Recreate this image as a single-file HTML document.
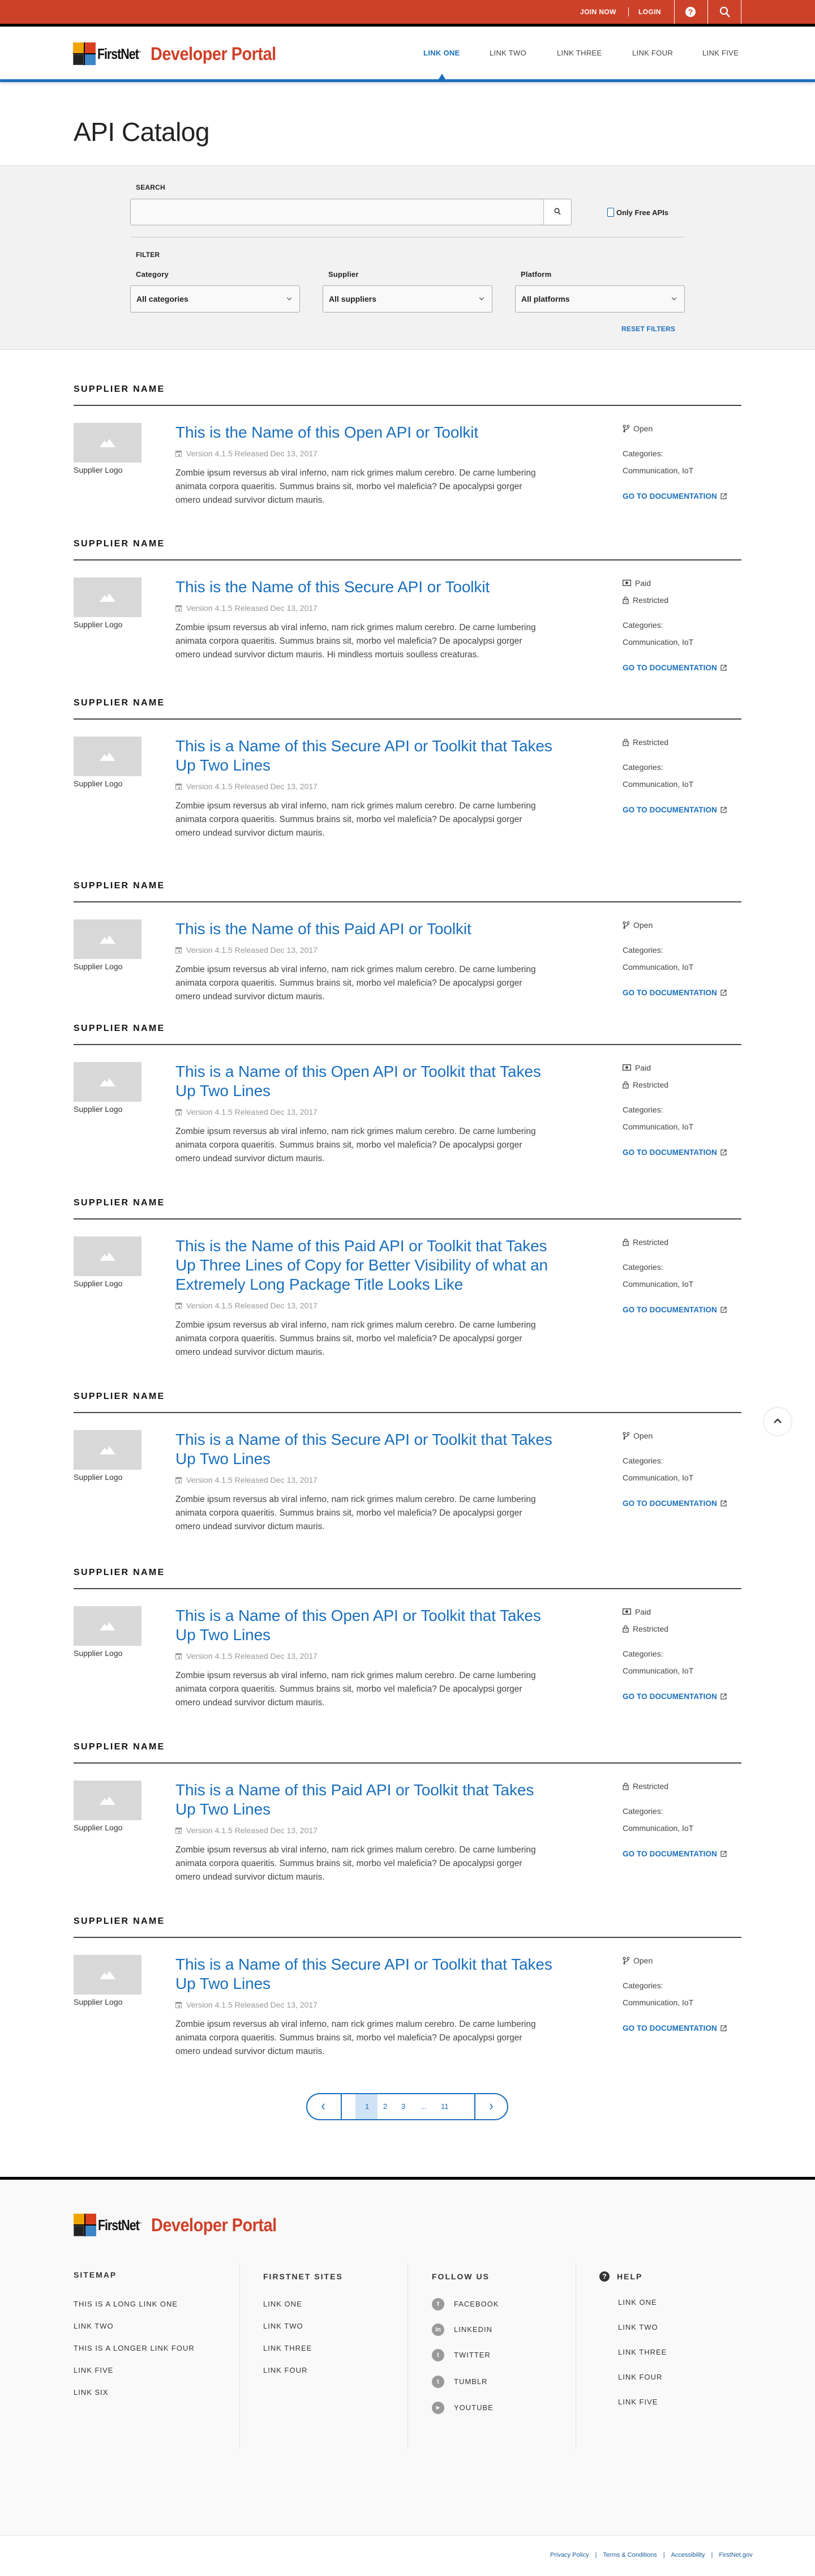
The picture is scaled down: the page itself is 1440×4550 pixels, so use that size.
<!DOCTYPE html>
<html><head><meta charset="utf-8">
<style>
*{box-sizing:border-box;margin:0;padding:0}
body{width:1440px;height:4550px;position:relative;background:#fff;font-family:"Liberation Sans",Arial,sans-serif;color:#333;overflow:hidden}
.abs{position:absolute}
.top{left:0;top:0;width:1440px;height:42px;background:#cc4129}
.blk{left:0;top:42px;width:1440px;height:5px;background:#000}
.tb{color:#fff;font-size:12px;font-weight:bold;letter-spacing:.4px;top:14px}
.vd{top:0;width:1px;height:42px;background:#fff}
.nav{top:86px;font-size:13px;letter-spacing:.3px;color:#444}
.logo{display:flex;align-items:center;height:40px}
.lg-ic{width:40px;height:40px;display:grid;grid-template-columns:19px 19px;grid-gap:2px;background:#000;padding:0}
.lg-ic div{width:19px;height:19px}
.fn{font-weight:bold;font-size:26px;color:#111;letter-spacing:-1.2px;margin-left:3px;transform:scaleX(.82);transform-origin:left;display:inline-block;width:92px}
.fn sup{font-size:6px;letter-spacing:0}
.dp{font-weight:bold;font-size:32px;color:#cf3f27;letter-spacing:-.5px;transform:scaleX(.9);transform-origin:left;display:inline-block;white-space:nowrap;margin-left:2px}
.lbl{font-size:12px;font-weight:bold;color:#222;letter-spacing:.2px}
.sel{height:48px;border:1px solid #aaa;border-radius:3px;background:#f9f9f9;width:300px;font-size:14px;font-weight:bold;color:#222;padding:15px 10px;top:504px}
.sel:after{content:"";position:absolute;right:15px;top:18px;width:5px;height:5px;border-right:1.5px solid #333;border-bottom:1.5px solid #333;transform:rotate(45deg)}
.item{position:absolute;left:130px;width:1180px}
.sn{font-size:16px;font-weight:bold;letter-spacing:2.3px;color:#111;line-height:20px;height:20px}
.rule{margin-top:17px;height:1.5px;background:#444}
.card{position:relative;margin-top:30px}
.lb{position:absolute;left:0;top:0;width:120px;height:70px;background:#d8d8d8}
.lb svg{position:absolute;left:46px;top:27px}
.lt{position:absolute;left:0;top:73px;font-size:14px;line-height:20px;color:#333}
.main{position:absolute;left:180px;top:0;width:700px}
.ttl{font-size:28px;line-height:34px;color:#1a6fbd;white-space:nowrap;letter-spacing:-.1px}
.ver{margin-top:10px;font-size:14px;line-height:20px;color:#999;display:flex;align-items:center;gap:8px}
.desc{margin-top:13px;font-size:15.5px;line-height:24px;color:#444;white-space:nowrap}
.rc{position:absolute;left:970px;top:0;width:210px;font-size:14px;color:#444}
.bd{line-height:20px;height:20px;display:flex;align-items:center;gap:7px;margin-bottom:10px}
.cat{margin-top:24px;line-height:20px}
.com{margin-top:10px;line-height:20px}
.doc{margin-top:26px;line-height:20px;color:#1a6fbd;font-weight:bold;font-size:13.5px;display:flex;align-items:center;gap:6px;letter-spacing:.1px}
.fh{font-size:14px;font-weight:bold;letter-spacing:2px;color:#333;top:4013px}
.fl{font-size:13px;letter-spacing:1px;color:#333;position:absolute}
.sc{position:absolute;width:22px;height:22px;border-radius:50%;background:#9a9a9a;color:#fff;font-size:11px;font-weight:bold;text-align:center;line-height:22px}
.fdiv{top:3996px;width:1px;height:330px;background:#e3e3e3}
.bls{left:972px;top:4507px;display:flex;gap:11px;font-size:11px;color:#1f5f97;white-space:nowrap}
</style></head><body>

<div class="abs top"></div>
<div class="abs blk"></div>
<div class="abs tb" style="left:1025px">JOIN NOW</div>
<div class="abs" style="left:1110px;top:13px;width:1px;height:16px;background:#fff"></div>
<div class="abs tb" style="left:1128px">LOGIN</div>
<div class="abs vd" style="left:1191px"></div>
<div class="abs vd" style="left:1250px"></div>
<div class="abs vd" style="left:1309px"></div>
<div class="abs" style="left:1211px;top:12px;width:18px;height:18px;border-radius:50%;background:#fff;color:#cc4129;font-weight:bold;font-size:14px;text-align:center;line-height:18px">?</div>
<svg class="abs" style="left:1271px;top:11px" width="20" height="21" viewBox="0 0 20 21"><circle cx="8" cy="8" r="6" fill="none" stroke="#fff" stroke-width="2.2"/><line x1="12.5" y1="12.5" x2="18" y2="19" stroke="#fff" stroke-width="2.4"/></svg>

<div class="abs logo" style="left:129px;top:75px">
 <div class="lg-ic"><div style="background:#f0a500"></div><div style="background:#d9401f"></div><div style="background:#222;border:1px solid #666"></div><div style="background:#3c86c8"></div></div>
 <span class="fn">FirstNet<sup>™</sup></span><span class="dp">Developer Portal</span>
</div>
<div class="abs nav" style="left:748px;color:#1a6fbd;font-weight:bold">LINK ONE</div>
<div class="abs nav" style="left:865px">LINK TWO</div>
<div class="abs nav" style="left:984px">LINK THREE</div>
<div class="abs nav" style="left:1117px">LINK FOUR</div>
<div class="abs nav" style="left:1241px">LINK FIVE</div>
<div class="abs" style="left:775px;top:130px;width:0;height:0;border-left:6px solid transparent;border-right:6px solid transparent;border-bottom:10px solid #1a6fbd"></div>
<div class="abs" style="left:0;top:140px;width:1440px;height:5px;background:#1a6fbd;box-shadow:0 3px 5px rgba(0,0,0,.15)"></div>

<div class="abs" style="left:130px;top:206px;font-size:46px;color:#222;letter-spacing:-.5px">API Catalog</div>

<div class="abs" style="left:0;top:292px;width:1440px;height:326px;background:#f2f2f2;border-top:1px solid #ddd;border-bottom:1px solid #ddd"></div>
<div class="abs lbl" style="left:240px;top:324px">SEARCH</div>
<div class="abs" style="left:230px;top:351px;width:780px;height:47px;border:1px solid #aaa;border-radius:3px;background:#f9f9f9"></div>
<div class="abs" style="left:960px;top:352px;width:49px;height:45px;background:#fff;border-left:1px solid #bbb;border-radius:0 3px 3px 0"></div>
<svg class="abs" style="left:979px;top:367px" width="12" height="13"><circle cx="5" cy="5" r="3.8" fill="none" stroke="#333" stroke-width="1.6"/><line x1="7.5" y1="8" x2="11" y2="12" stroke="#333" stroke-width="1.6"/></svg>
<div class="abs" style="left:1073px;top:367px;width:12px;height:16px;border:1.5px solid #1a5e9a;border-radius:2px;background:#fff"></div>
<div class="abs" style="left:1089px;top:368px;font-size:13px;font-weight:bold;color:#222">Only Free APIs</div>
<div class="abs" style="left:230px;top:418px;width:980px;height:2px;background:#ddd"></div>
<div class="abs lbl" style="left:240px;top:443px">FILTER</div>
<div class="abs lbl" style="left:240px;top:477px;font-size:13px">Category</div>
<div class="abs lbl" style="left:580px;top:477px;font-size:13px">Supplier</div>
<div class="abs lbl" style="left:920px;top:477px;font-size:13px">Platform</div>
<div class="abs sel" style="left:230px">All categories</div>
<div class="abs sel" style="left:570px">All suppliers</div>
<div class="abs sel" style="left:910px">All platforms</div>
<div class="abs" style="left:1098px;top:574px;font-size:12px;font-weight:bold;color:#1a6fbd;letter-spacing:.2px">RESET FILTERS</div>

<div class="item" style="top:678px"><div class="sn">SUPPLIER NAME</div><div class="rule"></div><div class="card">
<div class="lb"><svg width="28" height="16"><path d="M0 16 L9 4 L13 9 L17 1 L28 16Z" fill="#fff"/></svg></div><div class="lt">Supplier Logo</div>
<div class="main"><div class="ttl">This is the Name of this Open API or Toolkit</div>
<div class="ver"><svg width="11" height="12"><rect x=".5" y="1.5" width="10" height="10" fill="none" stroke="#999"/><rect x=".5" y="1.5" width="10" height="3" fill="#999"/><rect x="5" y="7" width="3" height="3" fill="#999"/></svg>Version 4.1.5 Released Dec 13, 2017</div>
<div class="desc">Zombie ipsum reversus ab viral inferno, nam rick grimes malum cerebro. De carne lumbering<br>animata corpora quaeritis. Summus brains sit, morbo vel maleficia? De apocalypsi gorger<br>omero undead survivor dictum mauris.</div></div>
<div class="rc"><div class="bd"><svg width="12" height="14"><circle cx="3" cy="3" r="2" fill="none" stroke="#444" stroke-width="1.3"/><circle cx="3" cy="12" r="1.6" fill="#444"/><circle cx="10" cy="3" r="2" fill="none" stroke="#444" stroke-width="1.3"/><path d="M3 5V12 M10 5C10 9 3 8 3 11" fill="none" stroke="#444" stroke-width="1.3"/></svg>Open</div>
<div class="cat">Categories:</div><div class="com">Communication, IoT</div><div class="doc">GO TO DOCUMENTATION <svg width="11" height="11"><path d="M5 1H1v9h9V6 M6 1h4v4 M10 1 4 7" fill="none" stroke="#444" stroke-width="1.2"/></svg></div></div>
</div></div>

<div class="item" style="top:951px"><div class="sn">SUPPLIER NAME</div><div class="rule"></div><div class="card">
<div class="lb"><svg width="28" height="16"><path d="M0 16 L9 4 L13 9 L17 1 L28 16Z" fill="#fff"/></svg></div><div class="lt">Supplier Logo</div>
<div class="main"><div class="ttl">This is the Name of this Secure API or Toolkit</div>
<div class="ver"><svg width="11" height="12"><rect x=".5" y="1.5" width="10" height="10" fill="none" stroke="#999"/><rect x=".5" y="1.5" width="10" height="3" fill="#999"/><rect x="5" y="7" width="3" height="3" fill="#999"/></svg>Version 4.1.5 Released Dec 13, 2017</div>
<div class="desc">Zombie ipsum reversus ab viral inferno, nam rick grimes malum cerebro. De carne lumbering<br>animata corpora quaeritis. Summus brains sit, morbo vel maleficia? De apocalypsi gorger<br>omero undead survivor dictum mauris. Hi mindless mortuis soulless creaturas.</div></div>
<div class="rc"><div class="bd"><svg width="15" height="11"><rect x=".7" y=".7" width="13.6" height="9.6" fill="none" stroke="#444" stroke-width="1.4"/><circle cx="7.5" cy="5.5" r="2.5" fill="#444"/></svg>Paid</div><div class="bd"><svg width="11" height="14"><path d="M3 6V4a2.5 2.5 0 0 1 5 0v2" fill="none" stroke="#444" stroke-width="1.3"/><rect x="1" y="6" width="9" height="7" fill="none" stroke="#444" stroke-width="1.3"/><rect x="5" y="8.5" width="1.4" height="2" fill="#444"/></svg>Restricted</div>
<div class="cat">Categories:</div><div class="com">Communication, IoT</div><div class="doc">GO TO DOCUMENTATION <svg width="11" height="11"><path d="M5 1H1v9h9V6 M6 1h4v4 M10 1 4 7" fill="none" stroke="#444" stroke-width="1.2"/></svg></div></div>
</div></div>

<div class="item" style="top:1232px"><div class="sn">SUPPLIER NAME</div><div class="rule"></div><div class="card">
<div class="lb"><svg width="28" height="16"><path d="M0 16 L9 4 L13 9 L17 1 L28 16Z" fill="#fff"/></svg></div><div class="lt">Supplier Logo</div>
<div class="main"><div class="ttl">This is a Name of this Secure API or Toolkit that Takes<br>Up Two Lines</div>
<div class="ver"><svg width="11" height="12"><rect x=".5" y="1.5" width="10" height="10" fill="none" stroke="#999"/><rect x=".5" y="1.5" width="10" height="3" fill="#999"/><rect x="5" y="7" width="3" height="3" fill="#999"/></svg>Version 4.1.5 Released Dec 13, 2017</div>
<div class="desc">Zombie ipsum reversus ab viral inferno, nam rick grimes malum cerebro. De carne lumbering<br>animata corpora quaeritis. Summus brains sit, morbo vel maleficia? De apocalypsi gorger<br>omero undead survivor dictum mauris.</div></div>
<div class="rc"><div class="bd"><svg width="11" height="14"><path d="M3 6V4a2.5 2.5 0 0 1 5 0v2" fill="none" stroke="#444" stroke-width="1.3"/><rect x="1" y="6" width="9" height="7" fill="none" stroke="#444" stroke-width="1.3"/><rect x="5" y="8.5" width="1.4" height="2" fill="#444"/></svg>Restricted</div>
<div class="cat">Categories:</div><div class="com">Communication, IoT</div><div class="doc">GO TO DOCUMENTATION <svg width="11" height="11"><path d="M5 1H1v9h9V6 M6 1h4v4 M10 1 4 7" fill="none" stroke="#444" stroke-width="1.2"/></svg></div></div>
</div></div>

<div class="item" style="top:1555px"><div class="sn">SUPPLIER NAME</div><div class="rule"></div><div class="card">
<div class="lb"><svg width="28" height="16"><path d="M0 16 L9 4 L13 9 L17 1 L28 16Z" fill="#fff"/></svg></div><div class="lt">Supplier Logo</div>
<div class="main"><div class="ttl">This is the Name of this Paid API or Toolkit</div>
<div class="ver"><svg width="11" height="12"><rect x=".5" y="1.5" width="10" height="10" fill="none" stroke="#999"/><rect x=".5" y="1.5" width="10" height="3" fill="#999"/><rect x="5" y="7" width="3" height="3" fill="#999"/></svg>Version 4.1.5 Released Dec 13, 2017</div>
<div class="desc">Zombie ipsum reversus ab viral inferno, nam rick grimes malum cerebro. De carne lumbering<br>animata corpora quaeritis. Summus brains sit, morbo vel maleficia? De apocalypsi gorger<br>omero undead survivor dictum mauris.</div></div>
<div class="rc"><div class="bd"><svg width="12" height="14"><circle cx="3" cy="3" r="2" fill="none" stroke="#444" stroke-width="1.3"/><circle cx="3" cy="12" r="1.6" fill="#444"/><circle cx="10" cy="3" r="2" fill="none" stroke="#444" stroke-width="1.3"/><path d="M3 5V12 M10 5C10 9 3 8 3 11" fill="none" stroke="#444" stroke-width="1.3"/></svg>Open</div>
<div class="cat">Categories:</div><div class="com">Communication, IoT</div><div class="doc">GO TO DOCUMENTATION <svg width="11" height="11"><path d="M5 1H1v9h9V6 M6 1h4v4 M10 1 4 7" fill="none" stroke="#444" stroke-width="1.2"/></svg></div></div>
</div></div>

<div class="item" style="top:1807px"><div class="sn">SUPPLIER NAME</div><div class="rule"></div><div class="card">
<div class="lb"><svg width="28" height="16"><path d="M0 16 L9 4 L13 9 L17 1 L28 16Z" fill="#fff"/></svg></div><div class="lt">Supplier Logo</div>
<div class="main"><div class="ttl">This is a Name of this Open API or Toolkit that Takes<br>Up Two Lines</div>
<div class="ver"><svg width="11" height="12"><rect x=".5" y="1.5" width="10" height="10" fill="none" stroke="#999"/><rect x=".5" y="1.5" width="10" height="3" fill="#999"/><rect x="5" y="7" width="3" height="3" fill="#999"/></svg>Version 4.1.5 Released Dec 13, 2017</div>
<div class="desc">Zombie ipsum reversus ab viral inferno, nam rick grimes malum cerebro. De carne lumbering<br>animata corpora quaeritis. Summus brains sit, morbo vel maleficia? De apocalypsi gorger<br>omero undead survivor dictum mauris.</div></div>
<div class="rc"><div class="bd"><svg width="15" height="11"><rect x=".7" y=".7" width="13.6" height="9.6" fill="none" stroke="#444" stroke-width="1.4"/><circle cx="7.5" cy="5.5" r="2.5" fill="#444"/></svg>Paid</div><div class="bd"><svg width="11" height="14"><path d="M3 6V4a2.5 2.5 0 0 1 5 0v2" fill="none" stroke="#444" stroke-width="1.3"/><rect x="1" y="6" width="9" height="7" fill="none" stroke="#444" stroke-width="1.3"/><rect x="5" y="8.5" width="1.4" height="2" fill="#444"/></svg>Restricted</div>
<div class="cat">Categories:</div><div class="com">Communication, IoT</div><div class="doc">GO TO DOCUMENTATION <svg width="11" height="11"><path d="M5 1H1v9h9V6 M6 1h4v4 M10 1 4 7" fill="none" stroke="#444" stroke-width="1.2"/></svg></div></div>
</div></div>

<div class="item" style="top:2115px"><div class="sn">SUPPLIER NAME</div><div class="rule"></div><div class="card">
<div class="lb"><svg width="28" height="16"><path d="M0 16 L9 4 L13 9 L17 1 L28 16Z" fill="#fff"/></svg></div><div class="lt">Supplier Logo</div>
<div class="main"><div class="ttl">This is the Name of this Paid API or Toolkit that Takes<br>Up Three Lines of Copy for Better Visibility of what an<br>Extremely Long Package Title Looks Like</div>
<div class="ver"><svg width="11" height="12"><rect x=".5" y="1.5" width="10" height="10" fill="none" stroke="#999"/><rect x=".5" y="1.5" width="10" height="3" fill="#999"/><rect x="5" y="7" width="3" height="3" fill="#999"/></svg>Version 4.1.5 Released Dec 13, 2017</div>
<div class="desc">Zombie ipsum reversus ab viral inferno, nam rick grimes malum cerebro. De carne lumbering<br>animata corpora quaeritis. Summus brains sit, morbo vel maleficia? De apocalypsi gorger<br>omero undead survivor dictum mauris.</div></div>
<div class="rc"><div class="bd"><svg width="11" height="14"><path d="M3 6V4a2.5 2.5 0 0 1 5 0v2" fill="none" stroke="#444" stroke-width="1.3"/><rect x="1" y="6" width="9" height="7" fill="none" stroke="#444" stroke-width="1.3"/><rect x="5" y="8.5" width="1.4" height="2" fill="#444"/></svg>Restricted</div>
<div class="cat">Categories:</div><div class="com">Communication, IoT</div><div class="doc">GO TO DOCUMENTATION <svg width="11" height="11"><path d="M5 1H1v9h9V6 M6 1h4v4 M10 1 4 7" fill="none" stroke="#444" stroke-width="1.2"/></svg></div></div>
</div></div>

<div class="item" style="top:2457px"><div class="sn">SUPPLIER NAME</div><div class="rule"></div><div class="card">
<div class="lb"><svg width="28" height="16"><path d="M0 16 L9 4 L13 9 L17 1 L28 16Z" fill="#fff"/></svg></div><div class="lt">Supplier Logo</div>
<div class="main"><div class="ttl">This is a Name of this Secure API or Toolkit that Takes<br>Up Two Lines</div>
<div class="ver"><svg width="11" height="12"><rect x=".5" y="1.5" width="10" height="10" fill="none" stroke="#999"/><rect x=".5" y="1.5" width="10" height="3" fill="#999"/><rect x="5" y="7" width="3" height="3" fill="#999"/></svg>Version 4.1.5 Released Dec 13, 2017</div>
<div class="desc">Zombie ipsum reversus ab viral inferno, nam rick grimes malum cerebro. De carne lumbering<br>animata corpora quaeritis. Summus brains sit, morbo vel maleficia? De apocalypsi gorger<br>omero undead survivor dictum mauris.</div></div>
<div class="rc"><div class="bd"><svg width="12" height="14"><circle cx="3" cy="3" r="2" fill="none" stroke="#444" stroke-width="1.3"/><circle cx="3" cy="12" r="1.6" fill="#444"/><circle cx="10" cy="3" r="2" fill="none" stroke="#444" stroke-width="1.3"/><path d="M3 5V12 M10 5C10 9 3 8 3 11" fill="none" stroke="#444" stroke-width="1.3"/></svg>Open</div>
<div class="cat">Categories:</div><div class="com">Communication, IoT</div><div class="doc">GO TO DOCUMENTATION <svg width="11" height="11"><path d="M5 1H1v9h9V6 M6 1h4v4 M10 1 4 7" fill="none" stroke="#444" stroke-width="1.2"/></svg></div></div>
</div></div>

<div class="item" style="top:2768px"><div class="sn">SUPPLIER NAME</div><div class="rule"></div><div class="card">
<div class="lb"><svg width="28" height="16"><path d="M0 16 L9 4 L13 9 L17 1 L28 16Z" fill="#fff"/></svg></div><div class="lt">Supplier Logo</div>
<div class="main"><div class="ttl">This is a Name of this Open API or Toolkit that Takes<br>Up Two Lines</div>
<div class="ver"><svg width="11" height="12"><rect x=".5" y="1.5" width="10" height="10" fill="none" stroke="#999"/><rect x=".5" y="1.5" width="10" height="3" fill="#999"/><rect x="5" y="7" width="3" height="3" fill="#999"/></svg>Version 4.1.5 Released Dec 13, 2017</div>
<div class="desc">Zombie ipsum reversus ab viral inferno, nam rick grimes malum cerebro. De carne lumbering<br>animata corpora quaeritis. Summus brains sit, morbo vel maleficia? De apocalypsi gorger<br>omero undead survivor dictum mauris.</div></div>
<div class="rc"><div class="bd"><svg width="15" height="11"><rect x=".7" y=".7" width="13.6" height="9.6" fill="none" stroke="#444" stroke-width="1.4"/><circle cx="7.5" cy="5.5" r="2.5" fill="#444"/></svg>Paid</div><div class="bd"><svg width="11" height="14"><path d="M3 6V4a2.5 2.5 0 0 1 5 0v2" fill="none" stroke="#444" stroke-width="1.3"/><rect x="1" y="6" width="9" height="7" fill="none" stroke="#444" stroke-width="1.3"/><rect x="5" y="8.5" width="1.4" height="2" fill="#444"/></svg>Restricted</div>
<div class="cat">Categories:</div><div class="com">Communication, IoT</div><div class="doc">GO TO DOCUMENTATION <svg width="11" height="11"><path d="M5 1H1v9h9V6 M6 1h4v4 M10 1 4 7" fill="none" stroke="#444" stroke-width="1.2"/></svg></div></div>
</div></div>

<div class="item" style="top:3076px"><div class="sn">SUPPLIER NAME</div><div class="rule"></div><div class="card">
<div class="lb"><svg width="28" height="16"><path d="M0 16 L9 4 L13 9 L17 1 L28 16Z" fill="#fff"/></svg></div><div class="lt">Supplier Logo</div>
<div class="main"><div class="ttl">This is a Name of this Paid API or Toolkit that Takes<br>Up Two Lines</div>
<div class="ver"><svg width="11" height="12"><rect x=".5" y="1.5" width="10" height="10" fill="none" stroke="#999"/><rect x=".5" y="1.5" width="10" height="3" fill="#999"/><rect x="5" y="7" width="3" height="3" fill="#999"/></svg>Version 4.1.5 Released Dec 13, 2017</div>
<div class="desc">Zombie ipsum reversus ab viral inferno, nam rick grimes malum cerebro. De carne lumbering<br>animata corpora quaeritis. Summus brains sit, morbo vel maleficia? De apocalypsi gorger<br>omero undead survivor dictum mauris.</div></div>
<div class="rc"><div class="bd"><svg width="11" height="14"><path d="M3 6V4a2.5 2.5 0 0 1 5 0v2" fill="none" stroke="#444" stroke-width="1.3"/><rect x="1" y="6" width="9" height="7" fill="none" stroke="#444" stroke-width="1.3"/><rect x="5" y="8.5" width="1.4" height="2" fill="#444"/></svg>Restricted</div>
<div class="cat">Categories:</div><div class="com">Communication, IoT</div><div class="doc">GO TO DOCUMENTATION <svg width="11" height="11"><path d="M5 1H1v9h9V6 M6 1h4v4 M10 1 4 7" fill="none" stroke="#444" stroke-width="1.2"/></svg></div></div>
</div></div>

<div class="item" style="top:3384px"><div class="sn">SUPPLIER NAME</div><div class="rule"></div><div class="card">
<div class="lb"><svg width="28" height="16"><path d="M0 16 L9 4 L13 9 L17 1 L28 16Z" fill="#fff"/></svg></div><div class="lt">Supplier Logo</div>
<div class="main"><div class="ttl">This is a Name of this Secure API or Toolkit that Takes<br>Up Two Lines</div>
<div class="ver"><svg width="11" height="12"><rect x=".5" y="1.5" width="10" height="10" fill="none" stroke="#999"/><rect x=".5" y="1.5" width="10" height="3" fill="#999"/><rect x="5" y="7" width="3" height="3" fill="#999"/></svg>Version 4.1.5 Released Dec 13, 2017</div>
<div class="desc">Zombie ipsum reversus ab viral inferno, nam rick grimes malum cerebro. De carne lumbering<br>animata corpora quaeritis. Summus brains sit, morbo vel maleficia? De apocalypsi gorger<br>omero undead survivor dictum mauris.</div></div>
<div class="rc"><div class="bd"><svg width="12" height="14"><circle cx="3" cy="3" r="2" fill="none" stroke="#444" stroke-width="1.3"/><circle cx="3" cy="12" r="1.6" fill="#444"/><circle cx="10" cy="3" r="2" fill="none" stroke="#444" stroke-width="1.3"/><path d="M3 5V12 M10 5C10 9 3 8 3 11" fill="none" stroke="#444" stroke-width="1.3"/></svg>Open</div>
<div class="cat">Categories:</div><div class="com">Communication, IoT</div><div class="doc">GO TO DOCUMENTATION <svg width="11" height="11"><path d="M5 1H1v9h9V6 M6 1h4v4 M10 1 4 7" fill="none" stroke="#444" stroke-width="1.2"/></svg></div></div>
</div></div>

<div class="abs" style="left:1350px;top:2487px;width:48px;height:48px;border-radius:50%;background:#fff;box-shadow:0 0 4px rgba(0,0,0,.2)"></div>
<svg class="abs" style="left:1366px;top:2505px" width="16" height="10"><path d="M2 8 8 2 14 8" fill="none" stroke="#333" stroke-width="2.4"/></svg>

<div class="abs" style="left:541px;top:3697px;width:357px;height:48px;border:2px solid #1a6fbd;border-radius:24px;overflow:hidden">
 <div class="abs" style="left:59px;top:0;width:2px;height:44px;background:#1a6fbd"></div>
 <div class="abs" style="left:295px;top:0;width:2px;height:44px;background:#1a6fbd"></div>
 <div class="abs" style="left:85px;top:0;width:39px;height:44px;background:#cfe3f7"></div>
</div>
<svg class="abs" style="left:567px;top:3715px" width="8" height="12"><path d="M6 1 2 6 6 11" fill="none" stroke="#1a6fbd" stroke-width="1.6"/></svg>
<svg class="abs" style="left:864px;top:3715px" width="8" height="12"><path d="M2 1 6 6 2 11" fill="none" stroke="#1a6fbd" stroke-width="1.6"/></svg>
<div class="abs" style="top:3713px;left:645px;font-size:13px;color:#1a6fbd">1</div>
<div class="abs" style="top:3713px;left:677px;font-size:13px;color:#1a6fbd">2</div>
<div class="abs" style="top:3713px;left:709px;font-size:13px;color:#1a6fbd">3</div>
<div class="abs" style="top:3713px;left:743px;font-size:13px;color:#1a6fbd">...</div>
<div class="abs" style="top:3713px;left:779px;font-size:13px;color:#1a6fbd">11</div>

<div class="abs" style="left:0;top:3845px;width:1440px;height:5px;background:#000"></div>
<div class="abs" style="left:0;top:3850px;width:1440px;height:629px;background:#f9f9f9;border-bottom:1px solid #e3e3e3"></div>
<div class="abs logo" style="left:130px;top:3910px">
 <div class="lg-ic"><div style="background:#f0a500"></div><div style="background:#d9401f"></div><div style="background:#222;border:1px solid #666"></div><div style="background:#3c86c8"></div></div>
 <span class="fn">FirstNet<sup>™</sup></span><span class="dp">Developer Portal</span>
</div>
<div class="abs fdiv" style="left:423px"></div>
<div class="abs fdiv" style="left:720px"></div>
<div class="abs fdiv" style="left:1017px"></div>
<div class="abs fh" style="left:130px;top:4010px">SITEMAP</div>
<div class="abs fh" style="left:465px">FIRSTNET SITES</div>
<div class="abs fh" style="left:763px">FOLLOW US</div>
<div class="abs" style="left:1059px;top:4012px;width:18px;height:18px;border-radius:50%;background:#333;color:#fff;font-size:13px;font-weight:bold;text-align:center;line-height:18px">?</div>
<div class="abs fh" style="left:1090px">HELP</div>

<div class="fl" style="left:130px;top:4062px">THIS IS A LONG LINK ONE</div>
<div class="fl" style="left:130px;top:4101px">LINK TWO</div>
<div class="fl" style="left:130px;top:4140px">THIS IS A LONGER LINK FOUR</div>
<div class="fl" style="left:130px;top:4179px">LINK FIVE</div>
<div class="fl" style="left:130px;top:4218px">LINK SIX</div>

<div class="fl" style="left:465px;top:4062px">LINK ONE</div>
<div class="fl" style="left:465px;top:4101px">LINK TWO</div>
<div class="fl" style="left:465px;top:4140px">LINK THREE</div>
<div class="fl" style="left:465px;top:4179px">LINK FOUR</div>

<div class="sc" style="left:763px;top:4059px">f</div><div class="fl" style="left:802px;top:4062px">FACEBOOK</div>
<div class="sc" style="left:763px;top:4104px">in</div><div class="fl" style="left:802px;top:4107px">LINKEDIN</div>
<div class="sc" style="left:763px;top:4149px">t</div><div class="fl" style="left:802px;top:4152px">TWITTER</div>
<div class="sc" style="left:763px;top:4196px">t</div><div class="fl" style="left:802px;top:4199px">TUMBLR</div>
<div class="sc" style="left:763px;top:4242px;font-size:8px">▶</div><div class="fl" style="left:802px;top:4245px">YOUTUBE</div>

<div class="fl" style="left:1092px;top:4059px">LINK ONE</div>
<div class="fl" style="left:1092px;top:4103px">LINK TWO</div>
<div class="fl" style="left:1092px;top:4147px">LINK THREE</div>
<div class="fl" style="left:1092px;top:4191px">LINK FOUR</div>
<div class="fl" style="left:1092px;top:4235px">LINK FIVE</div>

<div class="abs bls"><span>Privacy Policy</span><span>|</span><span>Terms &amp; Conditions</span><span>|</span><span>Accessibility</span><span>|</span><span>FirstNet.gov</span></div>
</body></html>
